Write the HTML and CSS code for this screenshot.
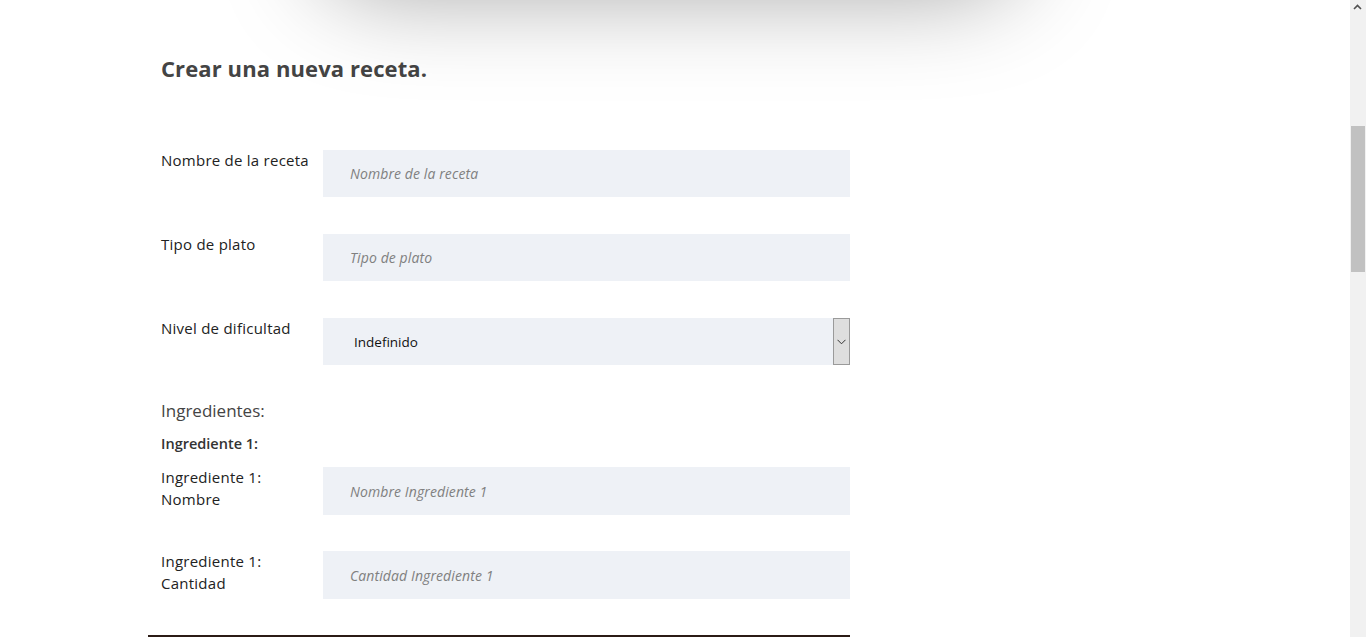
FILE: index.html
```html
<!DOCTYPE html>
<html lang="es">
<head>
<meta charset="utf-8">
<title>Crear receta</title>
<link rel="stylesheet" href="styles.css">
</head>
<body>
<div class="top-card"></div>
<main class="page">
  <form class="recipe-form">
    <h2 class="title">Crear una nueva receta.</h2>
    <div class="fields">
      <div class="row">
        <label class="label">Nombre de la receta</label>
        <div class="field"><span class="placeholder">Nombre de la receta</span></div>
      </div>
      <div class="row">
        <label class="label">Tipo de plato</label>
        <div class="field"><span class="placeholder">Tipo de plato</span></div>
      </div>
      <div class="row">
        <label class="label">Nivel de dificultad</label>
        <div class="field select"><span class="select-value">Indefinido</span>
          <span class="select-btn"><svg width="9" height="6" viewBox="0 0 9 6"><path d="M0.5 0.8 L4.5 4.8 L8.5 0.8" fill="none" stroke="#333" stroke-width="1"/></svg></span>
        </div>
      </div>
    </div>
    <h3 class="section">Ingredientes:</h3>
    <h4 class="subsection">Ingrediente 1:</h4>
    <div class="fields tall">
      <div class="row">
        <label class="label">Ingrediente 1:<br>Nombre</label>
        <div class="field"><span class="placeholder">Nombre Ingrediente 1</span></div>
      </div>
      <div class="row">
        <label class="label">Ingrediente 1:<br>Cantidad</label>
        <div class="field"><span class="placeholder">Cantidad Ingrediente 1</span></div>
      </div>
    </div>
  </form>
  <div class="bottom-bar"></div>
</main>
<div class="scrollbar">
  <span class="scroll-up"><svg width="9" height="6" viewBox="0 0 9 6"><path d="M1 5 L4.5 1.5 L8 5" fill="none" stroke="#505050" stroke-width="1.6"/></svg></span>
  <span class="scroll-thumb"></span>
</div>
</body>
</html>
```
FILE: styles.css
```css
html, body {
  margin: 0;
  padding: 0;
  height: 637px;
  overflow: hidden;
  background: #fff;
}
body {
  font-family: "Open Sans", "Liberation Sans", sans-serif;
  color: #222;
  position: relative;
}
.top-card {
  position: absolute;
  left: 320px;
  width: 700px;
  top: -160px;
  height: 130px;
  background: #fff;
  border-radius: 60px;
  box-shadow: 0 20px 100px rgba(0,0,0,0.38);
}
.page {
  padding: 53px 0 0 148px;
  width: 702px;
}
.recipe-form {
  padding-left: 13px;
}
.title {
  margin: 0;
  font-size: 22px;
  line-height: 30px;
  font-weight: 700;
  color: #444;
  letter-spacing: 0.1px;
}
.fields {
  display: flex;
  flex-direction: column;
  gap: 37px;
}
.fields.tall {
  gap: 36px;
}
.fields.tall .field {
  height: 48px;
}
.title + .fields {
  margin-top: 67px;
}
.row {
  display: grid;
  grid-template-columns: 162px 527px;
}
.label {
  font-size: 15px;
  line-height: 21.5px;
  color: #222;
  letter-spacing: 0.25px;
}
.field {
  height: 47px;
  background: #eef1f6;
  display: flex;
  align-items: center;
  padding-left: 27px;
  position: relative;
}
.placeholder {
  font-size: 14px;
  font-style: italic;
  color: #808080;
  letter-spacing: 0.1px;
}
.select {
  padding-left: 31px;
}
.select-value {
  font-size: 13.5px;
  color: #111;
}
.select-btn {
  position: absolute;
  right: 0;
  top: 0;
  width: 15px;
  height: 45px;
  border: 1px solid #9a9a9a;
  background: #dedede;
  display: flex;
  align-items: center;
  justify-content: center;
}
.section {
  margin: 34px 0 0;
  font-size: 17px;
  line-height: 24px;
  font-weight: 400;
  color: #444;
}
.subsection {
  margin: 10px 0 12px;
  font-size: 14.5px;
  line-height: 22px;
  font-weight: 600;
  color: #333;
}
.bottom-bar {
  margin-top: 36px;
  height: 2px;
  background: #2b1b15;
}
.scrollbar {
  position: fixed;
  right: 0;
  top: 0;
  width: 16px;
  height: 637px;
  background: #f1f1f1;
}
.scroll-up {
  position: absolute;
  top: 4px;
  left: 3px;
  width: 10px;
  height: 8px;
  display: flex;
}
.scroll-thumb {
  position: absolute;
  left: 1px;
  width: 14px;
  top: 126px;
  height: 146px;
  background: #c1c1c1;
}
```
